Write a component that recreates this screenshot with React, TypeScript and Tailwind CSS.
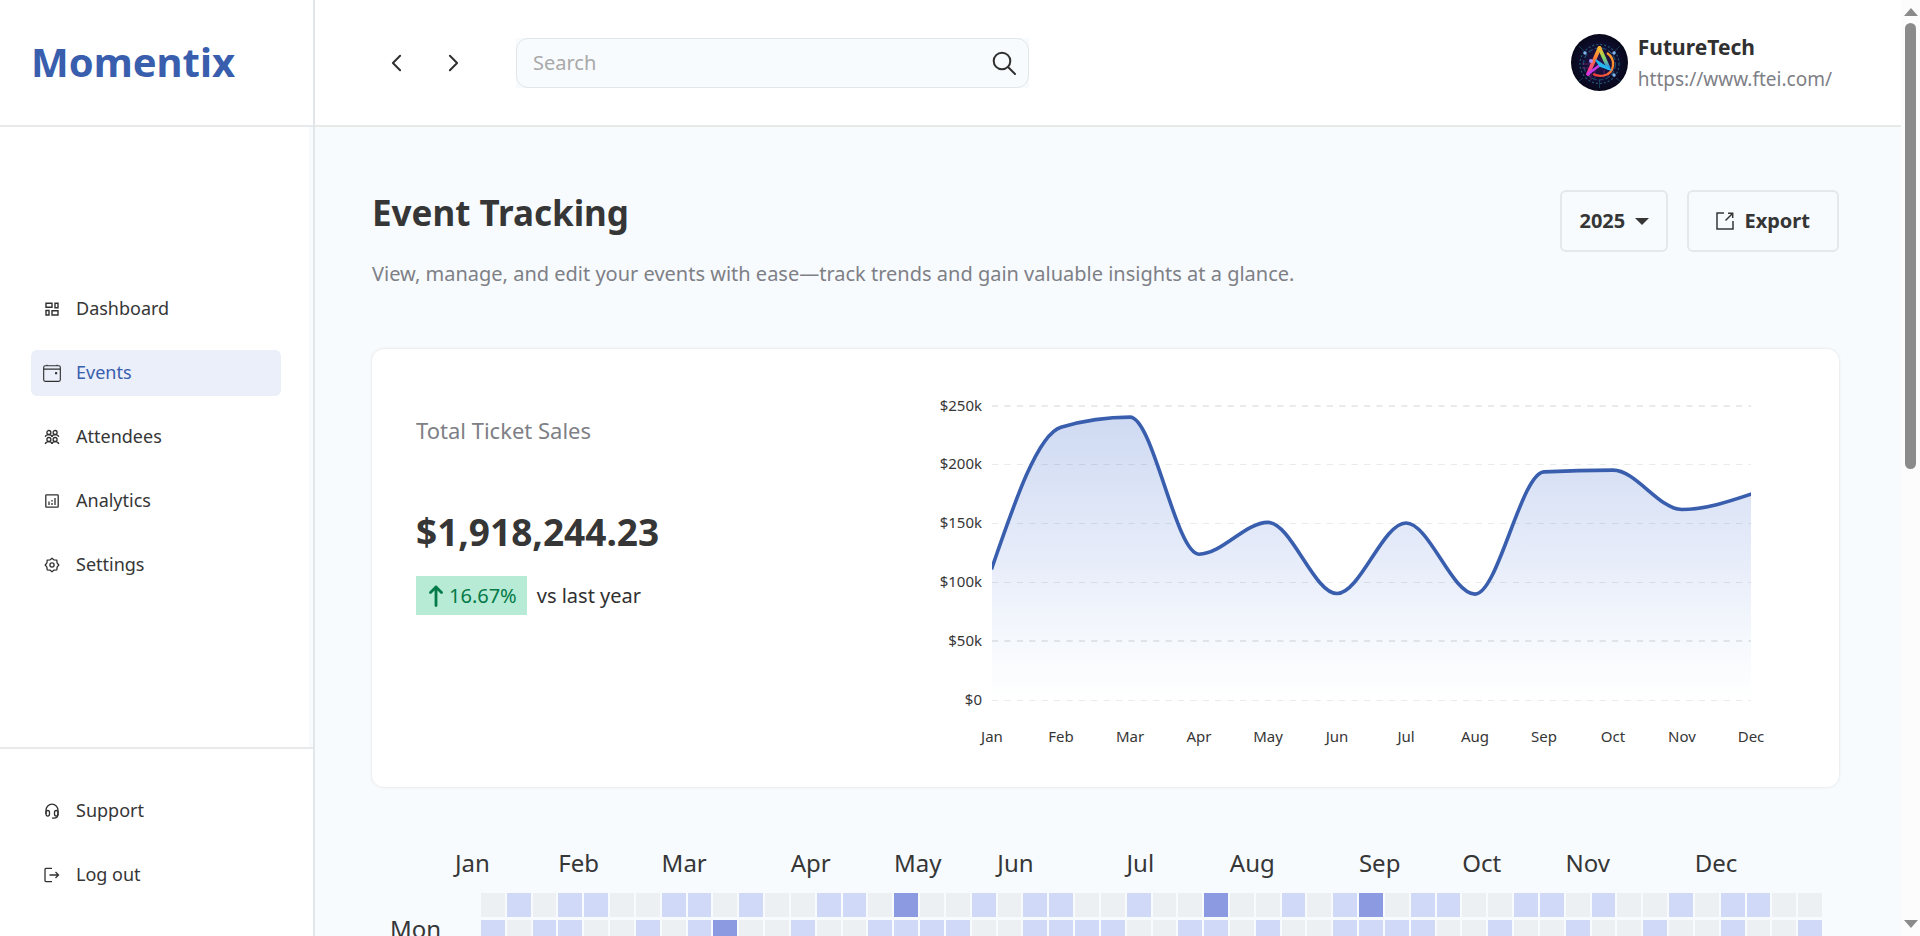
import type { ReactNode } from "react";

const MONTHS = ["Jan", "Feb", "Mar", "Apr", "May", "Jun", "Jul", "Aug", "Sep", "Oct", "Nov", "Dec"];

/* Number of week columns that each month's name covers. */
const MONTH_SPANS = [4, 4, 5, 4, 4, 5, 4, 5, 4, 4, 5, 4];

const HEAT = [
  "0101100110" + "1001102001" + "0110010020" + "0101201100" + "1101001011" + "00",
  "1011001012" + "0010011110" + "0111100110" + "1001111001" + "0010010010" + "01",
];

const HEAT_COLORS: Record<string, string> = {
  "0": "bg-[#ecf0f3]",
  "1": "bg-[#d0daf8]",
  "2": "bg-[#8c9ae1]",
};

function Icon({ children, size = "size-4" }: { children: ReactNode; size?: string }) {
  return (
    <svg viewBox="0 0 16 16" className={`${size} shrink-0`} fill="none" stroke="#303030" strokeWidth="1.3" aria-hidden="true">
      {children}
    </svg>
  );
}

const dashboardIcon = (
  <Icon>
    <path d="M2 2.300h6v4H2zM11 2.300h3v4.400h-3zM2 9.500h3V14H2zM8 9.700h6V14H8z" strokeWidth="1.400" />
  </Icon>
);
const eventsIcon = (
  <Icon size="size-[18px]">
    <rect x="0.600" y="1.600" width="14.800" height="13.800" rx="1.400" strokeWidth="1" />
    <path d="M0.600 4.600h14.800M3.600 0.600v1M12.400 0.600v1" strokeWidth="1" />
    <path d="M10.700 7.200h1.900v1.900h-1.900z" fill="#303030" stroke="none" />
  </Icon>
);
const attendeesIcon = (
  <Icon>
    <circle cx="4.900" cy="3.500" r="2" />
    <circle cx="11.100" cy="3.500" r="2" />
    <circle cx="4.900" cy="10.500" r="2" />
    <circle cx="11.100" cy="10.500" r="2" />
    <path d="M1.200 7.800c.4-1.300 1.700-2.200 3.700-2.200S7.800 6.500 8 7.800c.2-1.300 1.400-2.200 3.100-2.200s3.300.9 3.700 2.200M1.200 15c.4-1.500 1.700-2.400 3.700-2.400S7.800 13.500 8 15c.2-1.500 1.400-2.400 3.100-2.400s3.300.9 3.700 2.400" />
  </Icon>
);
const analyticsIcon = (
  <Icon>
    <rect x="1.800" y="1.800" width="12.400" height="12.400" rx="0.800" />
    <path d="M5 8.500v3.500M8 10v2M8 7v1.500M11 5v7" />
  </Icon>
);
const settingsIcon = (
  <Icon>
    <path
      d="M8 1.200L10.100 2.900 12.800 3.200 13.100 5.900 14.800 8 13.100 10.100 12.800 12.800 10.100 13.100 8 14.800 5.900 13.100 3.200 12.800 2.900 10.100 1.200 8 2.900 5.900 3.200 3.200 5.900 2.900z"
      strokeLinejoin="round"
    />
    <circle cx="8" cy="8" r="2.100" />
  </Icon>
);
const supportIcon = (
  <Icon>
    <path d="M2 11V7.500C2 3.800 4.700 1.200 8 1.200s6 2.600 6 6.300V11c0 2.600-1.600 4.200-4.400 4.200H8" />
    <path d="M2 9.500c0-1.200.7-2 1.800-2s1.700.8 1.700 2v1.600c0 1.200-.6 2-1.700 2S2 12.300 2 11.100zM14 9.500c0-1.200-.7-2-1.800-2s-1.700.8-1.700 2v1.600c0 1.200.6 2 1.700 2s1.800-.8 1.800-2z" />
  </Icon>
);
const logoutIcon = (
  <Icon>
    <path d="M8 1.400H2A1 1 0 0 0 1 2.400v11.200a1 1 0 0 0 1 1H8M5.500 8h9M11.500 5l3 3-3 3" />
  </Icon>
);

function NavItem({ icon, label, active = false }: { icon: ReactNode; label: string; active?: boolean }) {
  return (
    <a
      href="#"
      aria-current={active ? "page" : undefined}
      className={`flex h-[46px] items-center gap-3.5 rounded-md px-[11px] pb-px text-[18px] ${active ? "bg-[#ebeffa] text-[#395eae]" : "text-[#363636]"}`}
    >
      <span className="flex w-5 justify-center">{icon}</span>
      {label}
    </a>
  );
}

function Sidebar() {
  return (
    <aside className="flex w-[315px] shrink-0 border-r-2 border-[#e2e6e9] bg-[#f7fbfe]">
      <div className="mr-1 flex grow flex-col bg-white">
        <div className="-mr-1 flex h-[127px] items-center border-b-2 border-[#e8e9ea] bg-white px-[31px] pb-0.5">
          <a href="#" className="text-[40px] leading-none font-bold text-[#395eae]">Momentix</a>
        </div>
        <nav aria-label="Main" className="flex grow flex-col justify-center gap-[18px] pr-7 pl-[31px]">
          <NavItem icon={dashboardIcon} label="Dashboard" />
          <NavItem icon={eventsIcon} label="Events" active />
          <NavItem icon={attendeesIcon} label="Attendees" />
          <NavItem icon={analyticsIcon} label="Analytics" />
          <NavItem icon={settingsIcon} label="Settings" />
        </nav>
        <nav aria-label="Account" className="-mr-1 flex flex-col gap-[18px] border-t-2 border-[#e8e9ea] bg-white pt-[39px] pr-8 pb-[38px] pl-[31px]">
          <NavItem icon={supportIcon} label="Support" />
          <NavItem icon={logoutIcon} label="Log out" />
        </nav>
      </div>
    </aside>
  );
}

function Avatar() {
  return (
    <svg viewBox="0 0 57 57" className="size-[57px] shrink-0" role="img" aria-label="FutureTech logo">
      <defs>
        <radialGradient id="night">
          <stop offset="0" stopColor="#2b1550" />
          <stop offset="0.600" stopColor="#100e30" />
          <stop offset="1" stopColor="#07071a" />
        </radialGradient>
        <linearGradient id="legLeft" x1="0" y1="0" x2="0" y2="1">
          <stop offset="0" stopColor="#ffb12e" />
          <stop offset="0.500" stopColor="#ff6a3d" />
          <stop offset="1" stopColor="#f02bc0" />
        </linearGradient>
        <linearGradient id="legRight" x1="0" y1="0" x2="0" y2="1">
          <stop offset="0" stopColor="#ffb12e" />
          <stop offset="0.450" stopColor="#8fdc5a" />
          <stop offset="1" stopColor="#2a8df0" />
        </linearGradient>
        <linearGradient id="orbit" x1="1" y1="0" x2="0" y2="1">
          <stop offset="0" stopColor="#ffa62b" />
          <stop offset="1" stopColor="#f0383c" />
        </linearGradient>
      </defs>
      <circle cx="28.500" cy="28.500" r="28.500" fill="url(#night)" />
      <g fill="none" stroke="#2b8ba3">
        <circle cx="28.500" cy="30" r="19.500" strokeWidth="1.200" strokeDasharray="2 2" opacity="0.600" />
        <circle cx="28.500" cy="30" r="16" strokeWidth="1.200" strokeDasharray="5 2" opacity="0.500" />
        <path d="M28.500 46v8M12 44l-5 4M45 44l5 4M14 18l-6-6M43 18l6-6" opacity="0.400" />
      </g>
      <path d="M11 30h9M11 34h7M20 38v8M24 36v8M33 36v8M37 38v5" stroke="#a02a8d" opacity="0.500" />
      <g fill="#7fb4ea">
        <circle cx="14" cy="19" r="1.700" />
        <circle cx="43" cy="19" r="1.700" />
        <circle cx="43" cy="41" r="1.700" />
      </g>
      <path d="M36 19c9 6 8 20-3 22.500-4 1-8 0-11-1.500" fill="none" stroke="url(#orbit)" strokeWidth="2.300" />
      <path d="M28.500 14L17 40" stroke="url(#legLeft)" strokeWidth="3.800" strokeLinecap="round" />
      <path d="M28.500 14L37.500 34" stroke="url(#legRight)" strokeWidth="3.800" strokeLinecap="round" />
      <path d="M17 40l12-9" stroke="#c63be8" strokeWidth="2.600" strokeLinecap="round" />
      <path d="M25 26l15 10-11-4z" fill="#23b8ee" stroke="#23b8ee" strokeWidth="1.400" strokeLinejoin="round" />
      <circle cx="20" cy="27" r="2" fill="#a98cf0" />
    </svg>
  );
}

function TopBar() {
  return (
    <header className="flex h-[127px] shrink-0 items-center border-b-2 border-[#e8eaea] bg-white px-[69px]">
      <div className="flex gap-8">
        <button aria-label="Back" className="flex size-[25px] items-center justify-center">
          <svg viewBox="0 0 12 20" className="h-[18px] w-[11px]" fill="none" stroke="#303030" strokeWidth="2.200" strokeLinejoin="round" strokeLinecap="round"><path d="M10 2L2 10l8 8" /></svg>
        </button>
        <button aria-label="Forward" className="flex size-[25px] items-center justify-center">
          <svg viewBox="0 0 12 20" className="h-[18px] w-[11px]" fill="none" stroke="#303030" strokeWidth="2.200" strokeLinejoin="round" strokeLinecap="round"><path d="M2 2l8 8-8 8" /></svg>
        </button>
      </div>
      <div className="ml-[50px] w-[513px] bg-[#f7fbfe]">
        <label className="flex h-[50px] items-center rounded-xl border border-[#e1e6e9] px-4">
          <input type="search" placeholder="Search" aria-label="Search" className="min-w-0 grow bg-transparent text-[20px] outline-none placeholder:text-[#a9a9a9]" />
          <svg viewBox="0 0 24 24" className="-mr-1 size-6" fill="none" stroke="#303030" strokeWidth="2" aria-hidden="true">
            <circle cx="10" cy="10" r="8.300" />
            <path d="M16 16l7 7" strokeLinecap="round" />
          </svg>
        </label>
      </div>
      <div className="ml-auto flex items-center gap-2.5">
        <Avatar />
        <div>
          <p className="text-[21px] leading-8 font-bold text-[#303030]">FutureTech</p>
          <a href="https://www.ftei.com/" className="block text-[19px] leading-8 text-[#7e8086]">https://www.ftei.com/</a>
        </div>
      </div>
    </header>
  );
}

const LEVELS = ["$250k", "$200k", "$150k", "$100k", "$50k", "$0"];
const SALES = [112.5, 232, 240.5, 124, 151, 90.5, 150.5, 90, 194, 195.5, 162, 175];
const LEFT = 56;
const TOP = 16;
const STEP = 69;
const HEIGHT = 294;

/* Monotone cubic through the monthly totals. */
function salesCurve() {
  const points = SALES.map((value, i) => [LEFT + i * STEP, TOP + HEIGHT * (1 - value / 250)]);
  const slopes = points.slice(1).map((point, i) => (point[1] - points[i][1]) / STEP);
  const tangents = points.map((_, i) => {
    const before = slopes[i - 1];
    const after = slopes[i];
    if (before === undefined || after === undefined) return NaN;
    if (before * after <= 0) return 0;
    return Math.sign(after) * 2 * Math.min(Math.abs(before), Math.abs(after), Math.abs(before + after) / 4);
  });
  tangents[0] = (3 * slopes[0] - tangents[1]) / 2;
  tangents[11] = (3 * slopes[10] - tangents[10]) / 2;
  return points.slice(1).reduce((path, [x, y], i) => {
    const [px, py] = points[i];
    const third = STEP / 3;
    return `${path}C${px + third} ${py + tangents[i] * third} ${x - third} ${y - tangents[i + 1] * third} ${x} ${y}`;
  }, `M${points[0][0]} ${points[0][1]}`);
}

function SalesChart() {
  const curve = salesCurve();
  const right = LEFT + 11 * STEP;
  return (
    <svg viewBox="0 0 830 360" className="w-[830px] max-w-full" role="img" aria-label="Ticket sales by month">
      <defs>
        <linearGradient id="salesFill" x1="0" y1="0" x2="0" y2="1">
          <stop offset="0" stopColor="#cfdaf2" />
          <stop offset="0.550" stopColor="#e9eefa" />
          <stop offset="0.800" stopColor="#f6f9fd" />
          <stop offset="1" stopColor="#ffffff" />
        </linearGradient>
      </defs>
      <path d={`${curve}V${TOP + HEIGHT}H${LEFT}Z`} fill="url(#salesFill)" />
      {LEVELS.map((level, i) => {
        const y = TOP + Math.floor((i * HEIGHT) / 5);
        const thick = i === 0 || i === 4;
        return (
          <g key={level}>
            <line x1={LEFT} x2={right} y1={thick ? y : y + 0.5} y2={thick ? y : y + 0.5} stroke="#505a64" strokeOpacity="0.130" strokeWidth={thick ? 2 : 1} strokeDasharray="6.200 6.200" />
            <text x="46" y={y + 5} textAnchor="end" fontSize="15" fill="#363636">{level}</text>
          </g>
        );
      })}
      <svg x={LEFT} y="0" width={right - LEFT} height="330" viewBox={`${LEFT} 0 ${right - LEFT} 330`}>
        <path d={curve} fill="none" stroke="#395eae" strokeWidth="3.600" strokeLinecap="square" />
      </svg>
      {MONTHS.map((month, i) => (
        <text key={month} x={LEFT + i * STEP} y="352" textAnchor="middle" fontSize="15" fill="#363636">{month}</text>
      ))}
    </svg>
  );
}

function SalesCard() {
  return (
    <section className="mt-[59px] flex h-[438px] items-start justify-between rounded-xl bg-white pr-[73px] pl-11 shadow-[0_0_3px_rgba(0,0,0,0.12)]">
      <div className="pt-[63px]">
        <h2 className="text-[22px] leading-9 text-[#7e8086]">Total Ticket Sales</h2>
        <p className="mt-[56px] text-[37px] leading-[56px] font-bold text-[#363636]">$1,918,244.23</p>
        <p className="mt-4 flex items-center gap-2.5 text-[20px] text-[#303030]">
          <span className="flex h-[39px] items-center gap-1.5 bg-[#b8ebd5] pr-2.5 pl-[13px] text-[#047a48]">
            <svg viewBox="0 0 14 22" className="h-[22px] w-[14px]" fill="none" stroke="#047a48" strokeWidth="2.800" strokeLinecap="round" strokeLinejoin="round" aria-hidden="true"><path d="M7 20.500V2M1.500 7.500L7 2l5.500 5.500" /></svg>
            16.67%
          </span>
          vs last year
        </p>
      </div>
      <div className="flex min-w-0 pt-[41px]">
        <SalesChart />
      </div>
    </section>
  );
}

function HeatMap() {
  return (
    <section aria-label="Events by day" className="mt-[60px] pr-[17px] pl-[18px] text-[24px] leading-8 text-[#363636]">
      <div className="grid grid-cols-[repeat(52,minmax(0,1fr))] pr-6 pl-[65px]">
        {MONTHS.map((month, i) => (
          <span key={month} className={MONTH_SPANS[i] === 4 ? "col-span-4" : "col-span-5"}>{month}</span>
        ))}
      </div>
      <div className="mt-[14px] flex">
        <span className="w-[91px] pt-5">Mon</span>
        <div className="grid grow grid-cols-[repeat(52,minmax(0,1fr))] gap-0.5">
          {HEAT.map((row) => row.split("").map((level, i) => <span key={i} className={`h-6 ${HEAT_COLORS[level]}`} />))}
        </div>
      </div>
    </section>
  );
}

function Scrollbar() {
  return (
    <div aria-hidden="true" className="flex w-[19px] shrink-0 flex-col items-center bg-[#fcfcfc] py-2">
      <svg viewBox="0 0 14 8" className="h-2 w-[14px]"><path d="M7 0l7 8H0z" fill="#8b8b8b" /></svg>
      <div className="mt-[7px] h-[446px] w-[11px] rounded-full bg-[#8b8b8b]" />
      <svg viewBox="0 0 14 8" className="mt-auto h-2 w-[14px]"><path d="M7 8L0 0h14z" fill="#8b8b8b" /></svg>
    </div>
  );
}

export default function App() {
  return (
    <div className="flex h-screen overflow-hidden bg-[#f7fbfe] font-['Noto_Sans',sans-serif]">
      <Sidebar />
      <div className="flex min-w-0 grow flex-col">
        <TopBar />
        <main className="min-h-0 grow overflow-hidden pt-[63px] pr-[62px] pl-[57px]">
          <div className="flex items-start justify-between">
            <div>
              <h1 className="text-[35px] leading-[46px] font-bold text-[#363636]">Event Tracking</h1>
              <p className="mt-[22px] text-[20px] leading-8 text-[#7e8086]">
                View, manage, and edit your events with ease—track trends and gain valuable insights at a glance.
              </p>
            </div>
            <div className="flex gap-[19px] text-[20px] font-bold text-[#363636]">
              <label className="flex h-[62px] items-center gap-2.5 rounded-md border-2 border-[#e4e8ea] px-[17px]">
                <select aria-label="Year" className="appearance-none bg-transparent outline-none">
                  <option>2025</option>
                </select>
                <svg viewBox="0 0 14 7" className="h-[7px] w-[14px]" aria-hidden="true"><path d="M0 0h14L7 7z" fill="#363636" /></svg>
              </label>
              <button className="flex h-[62px] items-center gap-2.5 rounded-md border-2 border-[#e4e8ea] px-[27px]">
                <svg viewBox="0 0 18 18" className="size-[18px]" fill="none" stroke="#363636" strokeWidth="1.500" aria-hidden="true"><path d="M8 1H1v16h16V9M9.500 8.500L16.500 1.500M12 1.300h4.700V6" /></svg>
                Export
              </button>
            </div>
          </div>
          <SalesCard />
          <HeatMap />
        </main>
      </div>
      <Scrollbar />
    </div>
  );
}
